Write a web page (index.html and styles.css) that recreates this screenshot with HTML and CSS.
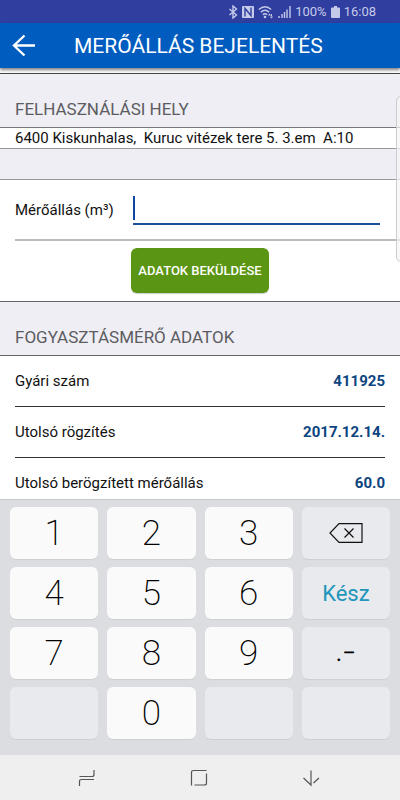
FILE: index.html
```html
<!DOCTYPE html>
<html lang="hu">
<head>
<meta charset="utf-8">
<meta name="viewport" content="width=device-width, initial-scale=1">
<title>Mérőállás bejelentés</title>
<link rel="stylesheet" href="styles.css">
</head>
<body>
<div class="app">
  <div class="status">
    <svg class="status-icon" width="10" height="14" viewBox="0 0 10 14"><path d="M1.500 4l7 6L5 13V1l3.500 3-7 6"/></svg>
    <svg class="status-icon" width="12" height="12" viewBox="0 0 12 12"><path class="solid" d="M1 0h10q1 0 1 1v10q0 1-1 1H1q-1 0-1-1V1q0-1 1-1z"/><path class="cut" d="M3 10.500V2.500L9 9.500V1.500"/></svg>
    <svg class="status-icon" width="16" height="14" viewBox="0 0 16 14"><path d="M.8 4.500q6.200-5.500 12.400 0M2.800 7.200q4.200-3.800 8.400 0M4.800 9.800q2.200-2 4.400 0"/><circle class="solid" cx="7" cy="12" r="1.300"/><path class="solid" d="M10 10.500l1.500-2 1.500 2zM12 11.500l1.500 2 1.500-2zM13 9h1v3h-1z"/></svg>
    <svg class="status-icon" width="13" height="12" viewBox="0 0 13 12"><path d="M1 10v2M4 8v4M6.500 6v6M9 3.500V12M12 0v12"/></svg>
    <span class="percent">100%</span>
    <svg class="status-icon" width="9" height="12" viewBox="0 0 9 12"><path class="solid" d="M3 0h3v1.500h2q1 0 1 1V11q0 1-1 1H1q-1 0-1-1V2.500q0-1 1-1h2z"/></svg>
    <span class="clock">16:08</span>
  </div>
  <header class="toolbar">
    <button class="back" type="button" aria-label="Vissza"><svg width="24" height="24" viewBox="0 0 24 24"><path d="M23 11.500H2M12.500 1.500L2 11.500l10.500 10"/></svg></button>
    <h1 class="title">MERŐÁLLÁS BEJELENTÉS</h1>
  </header>
  <main class="content">
    <h2 class="section">FELHASZNÁLÁSI HELY</h2>
    <p class="address">6400 Kiskunhalas,&nbsp; Kuruc vitézek tere 5. 3.em&nbsp; A:10</p>
    <div class="spacer"></div>
    <form class="form">
      <div class="reading">
        <label for="reading">Mérőállás (m³)</label>
        <div class="field"><span class="caret"></span><input id="reading" type="text" inputmode="decimal"></div>
      </div>
      <button class="submit" type="button">ADATOK BEKÜLDÉSE</button>
    </form>
    <h2 class="section section-meter">FOGYASZTÁSMÉRŐ ADATOK</h2>
    <dl class="facts">
      <div class="fact"><dt>Gyári szám</dt><dd>411925</dd></div>
      <div class="fact"><dt>Utolsó rögzítés</dt><dd>2017.12.14.</dd></div>
      <div class="fact"><dt>Utolsó berögzített mérőállás</dt><dd>60.0</dd></div>
    </dl>
  </main>
  <div class="keyboard">
    <button class="key" type="button">1</button>
    <button class="key" type="button">2</button>
    <button class="key" type="button">3</button>
    <button class="key dim" type="button" aria-label="Törlés"><svg width="34" height="20" viewBox="0 0 34 20"><path d="M10 .7H33V19.300H10L1 10zM15.500 5.500l9 9M24.500 5.500l-9 9"/></svg></button>
    <button class="key" type="button">4</button>
    <button class="key" type="button">5</button>
    <button class="key" type="button">6</button>
    <button class="key dim done" type="button">Kész</button>
    <button class="key" type="button">7</button>
    <button class="key" type="button">8</button>
    <button class="key" type="button">9</button>
    <button class="key dim sign" type="button">.−</button>
    <span class="key dim"></span>
    <button class="key" type="button">0</button>
    <span class="key dim"></span>
    <span class="key dim"></span>
  </div>
  <nav class="navbar">
    <button type="button" aria-label="Legutóbbi"><svg width="18" height="18" viewBox="0 0 18 18"><path d="M1.500 7.500H14q2 0 2-2V1M16 10.500H3.500q-2 0-2 2V17"/></svg></button>
    <button type="button" aria-label="Kezdőlap"><svg width="18" height="18" viewBox="0 0 18 18"><path d="M1.500 16.500V3.500q0-2 2-2H16.500M16.500 4.500V14q0 2-2 2H4.500"/></svg></button>
    <button type="button" aria-label="Elrejtés"><svg width="18" height="18" viewBox="0 0 18 18"><path d="M9 1.500V16L1.500 9M11.500 14L17 9"/></svg></button>
  </nav>
  <div class="edge-handle"></div>
</div>
</body>
</html>
```
FILE: styles.css
```css
* { box-sizing: border-box; }
body {
  margin: 0;
  font-family: Roboto, "Liberation Sans", sans-serif;
  font-size: 15px;
  color: #111;
  background: #fff;
}
button { font: inherit; border: 0; padding: 0; background: none; }
h1, h2, p, dl, dd { margin: 0; font-weight: 400; }
svg { display: block; fill: none; }
.app {
  position: relative;
  display: flex;
  flex-direction: column;
  height: 100vh;
  overflow: hidden;
}
.status {
  display: flex;
  align-items: center;
  justify-content: flex-end;
  gap: 4px;
  height: 23px;
  flex: none;
  padding-right: 24px;
  background: #303f9f;
  color: #c5cae9;
  font-size: 13px;
}
.status-icon { stroke: #c5cae9; stroke-width: 1.4; }
.solid { fill: #c5cae9; stroke: none; }
.cut { stroke: #303f9f; }
.toolbar {
  position: relative;
  display: flex;
  align-items: center;
  gap: 38px;
  height: 45px;
  flex: none;
  padding-left: 12px;
  background: #005cbf;
  color: #fff;
  box-shadow: 0 2px 3px rgba(0, 0, 0, .5);
}
.back svg { stroke: #fff; stroke-width: 2.4; }
.title { font-size: 21px; line-height: 28px; }
.content { flex: 1; min-height: 0; overflow: hidden; padding-top: 5px; }
.section {
  padding: 23px 15px 6px;
  border-top: 1px solid #444;
  border-bottom: 1px solid #777;
  background: #efeef4;
  color: #5c5c61;
  font-size: 17px;
  line-height: 24px;
}
.address { padding: 0 15px; line-height: 20px; white-space: nowrap; }
.spacer {
  height: 32px;
  border-top: 1px solid #999;
  border-bottom: 1px solid #999;
  background: #efeef4;
}
.form { display: flex; flex-direction: column; align-items: center; padding-bottom: 8px; }
.reading {
  display: flex;
  align-items: center;
  align-self: stretch;
  gap: 19px;
  height: 61px;
  margin-left: 15px;
  padding-right: 20px;
  border-bottom: 2px solid #bbb;
}
.field {
  display: flex;
  flex: 1;
  margin-top: 1px;
  padding-bottom: 3px;
  border-bottom: 2px solid #1c4f9c;
}
.caret { width: 2px; height: 24px; background: #0d47a1; }
.field input {
  flex: 1;
  min-width: 0;
  padding: 0 4px;
  border: 0;
  outline: 0;
  background: none;
  font: inherit;
}
.submit {
  height: 45px;
  margin-top: 7px;
  padding: 0 7px;
  border-radius: 6px;
  background: #5a9614;
  color: #fff;
  font-size: 13px;
  font-weight: 500;
  box-shadow: 0 1px 1px rgba(0, 0, 0, .2);
}
.section-meter { border-color: #666; }
.facts { padding: 0 15px; }
.fact {
  display: flex;
  align-items: center;
  justify-content: space-between;
  height: 51px;
  border-bottom: 1px solid #333;
}
.fact dd { color: #0d4580; font-weight: 700; }
.keyboard {
  display: grid;
  grid-template-columns: repeat(4, 1fr);
  grid-auto-rows: 52px;
  gap: 8px 9px;
  flex: none;
  padding: 7px 10px 16px;
  border-top: 1px solid #c8c9cc;
  background: #dcdde1;
}
.key {
  display: flex;
  align-items: center;
  justify-content: center;
  border-radius: 6px;
  background: #fafafa;
  color: #000;
  font-size: 35px;
  font-weight: 200;
  box-shadow: 0 1px 0 rgba(0, 0, 0, .06);
}
.key svg { stroke: #111; stroke-width: 1.2; }
.dim { background: #e9eaee; }
.done { color: #2196ba; font-size: 22px; font-weight: 400; }
.sign { font-size: 24px; font-weight: 400; }
.navbar {
  display: flex;
  align-items: center;
  justify-content: center;
  gap: 94px;
  height: 45px;
  flex: none;
  padding-right: 2px;
  background: #efefef;
}
.navbar svg { stroke: #555; stroke-width: 1.2; }
.edge-handle {
  position: absolute;
  top: 96px;
  right: -8px;
  width: 12px;
  height: 166px;
  border: 1px solid #ccc;
  border-radius: 5px;
  background: rgba(245, 245, 245, .7);
}
```
